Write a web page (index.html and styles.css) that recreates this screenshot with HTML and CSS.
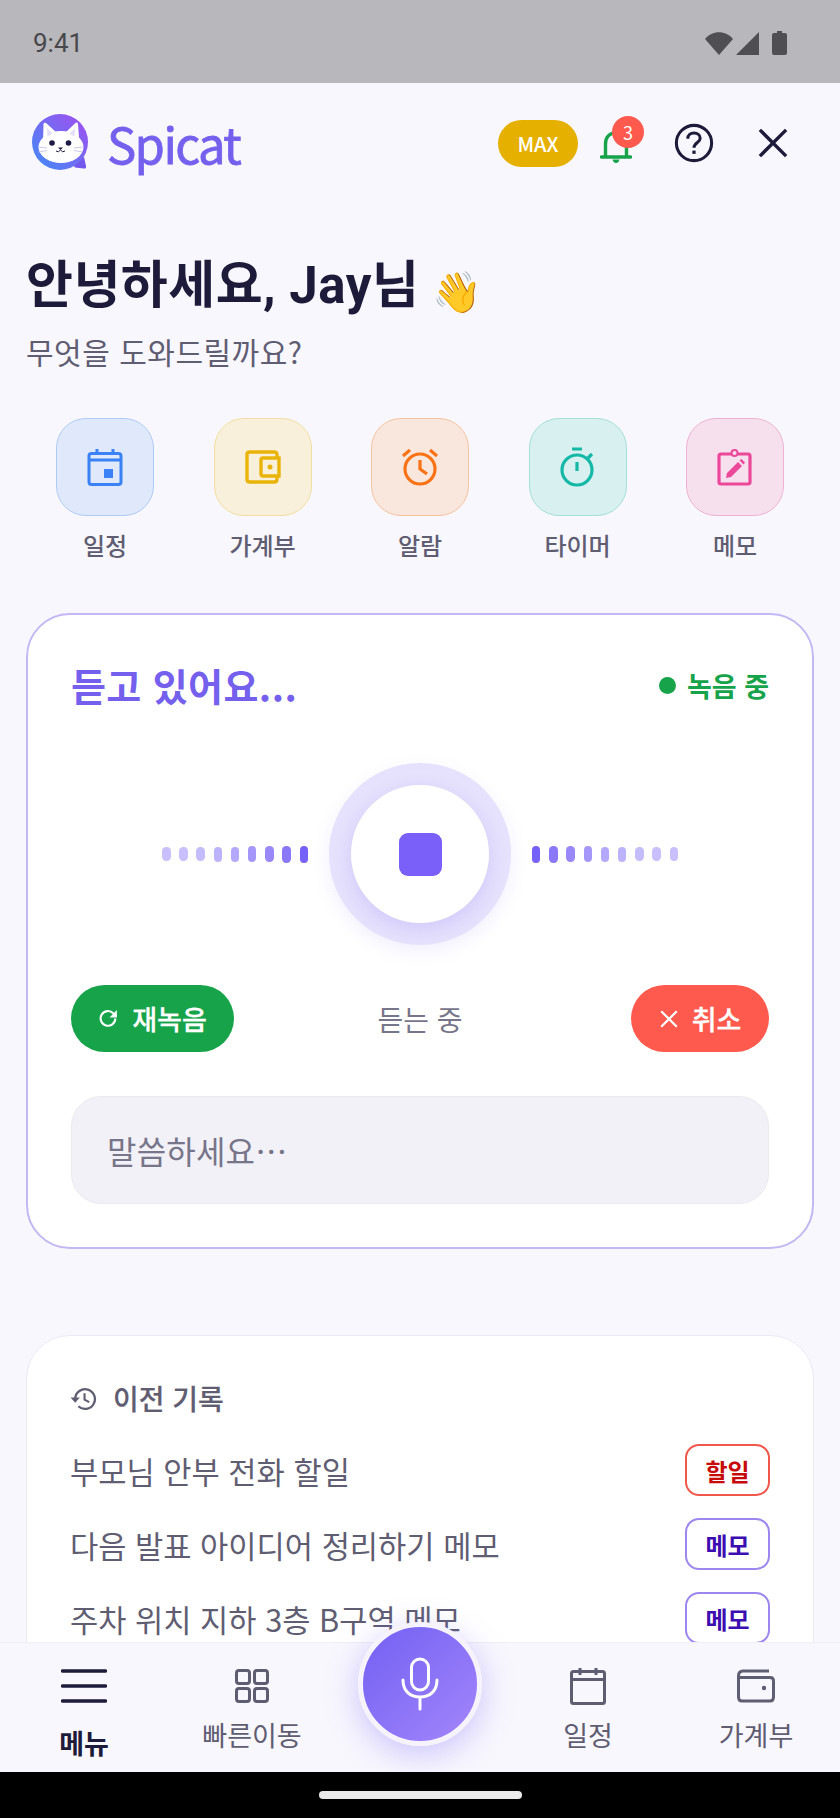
FILE: index.html
```html
<!DOCTYPE html>
<html lang="ko">
<head>
<meta charset="utf-8">
<title>Spicat</title>
<link rel="stylesheet" href="styles.css">
</head>
<body>
<div class="screen">
  <div class="status">
    <span class="time">9:41</span>
    <div class="status-icons">
      <svg width="28" height="23" viewBox="0 0 28 23"><path class="sb" d="M0 7 C7 -2 21 -2 28 7 L14 23 Z"/></svg>
      <svg width="23" height="23" viewBox="0 0 23 23"><path class="sb" d="M0 23 L23 0 V23 Z"/></svg>
      <svg width="15" height="24" viewBox="0 0 15 24"><path class="sb" d="M5 0 H10 V2 H13 Q15 2 15 4 V22 Q15 24 13 24 H2 Q0 24 0 22 V4 Q0 2 2 2 H5 Z"/></svg>
    </div>
  </div>

  <main class="page">
    <header class="top">
      <div class="brand">
        <svg class="logo" width="58" height="60" viewBox="0 0 58 60">
          <defs>
            <linearGradient id="lg" x1="0" y1="1" x2="1" y2="0">
              <stop offset="0" stop-color="#3f8cf5"/><stop offset="1" stop-color="#a54cf0"/>
            </linearGradient>
          </defs>
          <path d="M40 50 L52 44 L54 53 Q54.500 56 51.500 55.500 L43 54.500 Z" fill="#7358ee"/>
          <circle cx="28" cy="29" r="28" fill="url(#lg)"/>
          <path d="M11 30 L11.500 11 Q12 9 14 10 L24 19 Q29 18.500 34 19 L44 9.500 Q46 9 46 11 L47.500 30 Z" fill="#fff"/>
          <ellipse cx="29" cy="34" rx="22.500" ry="16" fill="#fff"/>
          <path d="M15 15 L20.500 20.500 L15.500 23.500 Z M43 15 L37.500 20.500 L42.500 23.500 Z" fill="#e4dffa"/>
          <circle cx="20" cy="30" r="2.800" fill="#1f1a45"/><circle cx="36.500" cy="30" r="2.800" fill="#1f1a45"/>
          <path d="M26 34.500 H31 L28.500 37 Z" fill="#1f1a45"/>
          <path d="M24 38 Q26.500 40 28.500 37 Q30.500 40 33 38" fill="none" stroke="#1f1a45" stroke-width="1"/>
          <path d="M6 34 L15 35 M6.500 39 L15 37.500 M51 34 L42 35 M50.500 39 L42 37.500" stroke="#cfc8ea" stroke-width="1" fill="none"/>
        </svg>
        <span class="brand-name">Spicat</span>
      </div>
      <div class="top-actions">
        <span class="max">MAX</span>
        <div class="bell">
          <svg width="32" height="34" viewBox="0 0 32 34"><path d="M5.500 27 V15 C5.500 8 9.500 4 16 4 C22.500 4 26.500 8 26.500 15 V27 M1.500 28 H30.500" fill="none" stroke="#16a34a" stroke-width="3.400" stroke-linecap="round"/><path d="M12.500 30.500 H19.500 Q18.500 34 16 34 Q13.500 34 12.500 30.500 Z" fill="#16a34a"/></svg>
          <span class="badge">3</span>
        </div>
        <svg class="help" width="40" height="40" viewBox="0 0 42 42"><circle cx="21" cy="21" r="18.500" fill="none" stroke="#1e1b3a" stroke-width="3.200"/><path d="M14.500 16.500 C14.500 12.500 17.500 10.500 21 10.500 C24.500 10.500 27.500 12.500 27.500 16 C27.500 20.500 21 20.500 21 26" fill="none" stroke="#1e1b3a" stroke-width="3.200"/><rect x="19.300" y="29" width="3.400" height="3.400" fill="#1e1b3a"/></svg>
        <svg class="close" width="30" height="30" viewBox="0 0 32 32"><path d="M2 2 L30 30 M30 2 L2 30" fill="none" stroke="#1e1b3a" stroke-width="3.600"/></svg>
      </div>
    </header>

    <section class="hello">
      <h1 class="hello-title">안녕하세요, Jay님 <span class="wave">👋</span></h1>
      <p class="hello-sub">무엇을 도와드릴까요?</p>
    </section>

    <nav class="quick">
      <div class="quick-item">
        <div class="quick-box q-blue"><svg width="36" height="38" viewBox="0 0 36 38"><path d="M2 8 Q2 5.500 4.500 5.500 H31.500 Q34 5.500 34 8 V34 Q34 36.500 31.500 36.500 H4.500 Q2 36.500 2 34 Z M2 12 H34 M10 1 V6 M26 1 V6" fill="none" stroke="#3b82f6" stroke-width="3"/><rect x="17" y="21" width="9" height="9" fill="#3b82f6"/></svg></div>
        <span class="quick-label">일정</span>
      </div>
      <div class="quick-item">
        <div class="quick-box q-yellow"><svg width="36" height="34" viewBox="0 0 36 34"><path d="M32 7 V4.500 Q32 2 29 2 H5 Q2 2 2 4.500 V29.500 Q2 32 5 32 H29 Q32 32 32 29.500 V27" fill="none" stroke="#eab308" stroke-width="3.400"/><path d="M18 8 H34 V26 H18 Q16 26 16 24 V10 Q16 8 18 8 Z" fill="none" stroke="#eab308" stroke-width="3.400"/><circle cx="25" cy="17" r="2.500" fill="#eab308"/></svg></div>
        <span class="quick-label">가계부</span>
      </div>
      <div class="quick-item">
        <div class="quick-box q-orange"><svg width="38" height="38" viewBox="0 0 38 38"><circle cx="19" cy="21" r="15" fill="none" stroke="#f97316" stroke-width="3.200"/><path d="M19 12 V21 L26 26 M2 8 L9 2 M36 8 L29 2" fill="none" stroke="#f97316" stroke-width="3.200"/></svg></div>
        <span class="quick-label">알람</span>
      </div>
      <div class="quick-item">
        <div class="quick-box q-teal"><svg width="36" height="40" viewBox="0 0 36 40"><circle cx="17" cy="23" r="15" fill="none" stroke="#14b8a6" stroke-width="3.200"/><path d="M12 2 H22 M17 15 V24 M28 11 L32 7" fill="none" stroke="#14b8a6" stroke-width="3.200"/></svg></div>
        <span class="quick-label">타이머</span>
      </div>
      <div class="quick-item">
        <div class="quick-box q-pink"><svg width="36" height="38" viewBox="0 0 36 38"><rect x="2" y="6" width="31" height="30" rx="2" fill="none" stroke="#ec4899" stroke-width="3.200"/><circle cx="17.500" cy="5" r="3" fill="#f6e0ee" stroke="#ec4899" stroke-width="2"/><path d="M9 30 L10 25 L21 14 L25 18 L14 29 Z M22.500 12.500 L24.500 11 L28 14.500 L26.500 16.500 Z" fill="#ec4899"/></svg></div>
        <span class="quick-label">메모</span>
      </div>
    </nav>

    <section class="card listen">
      <div class="listen-head">
        <h2 class="listen-title">듣고 있어요...</h2>
        <span class="rec"><i class="rec-dot"></i>녹음 중</span>
      </div>
      <div class="voice">
        <div class="wave-bars">
          <i class="bar" style="height:14px;opacity:.4"></i><i class="bar" style="height:14px;opacity:.4"></i><i class="bar" style="height:14px;opacity:.42"></i><i class="bar" style="height:15px;opacity:.48"></i><i class="bar" style="height:15px;opacity:.55"></i><i class="bar" style="height:16px;opacity:.65"></i><i class="bar" style="height:16px;opacity:.75"></i><i class="bar" style="height:17px;opacity:.85"></i><i class="bar" style="height:17px;opacity:1"></i>
        </div>
        <div class="stop-ring"><div class="stop-core"><i class="stop-square"></i></div></div>
        <div class="wave-bars">
          <i class="bar" style="height:17px;opacity:1"></i><i class="bar" style="height:17px;opacity:.85"></i><i class="bar" style="height:16px;opacity:.75"></i><i class="bar" style="height:16px;opacity:.65"></i><i class="bar" style="height:15px;opacity:.55"></i><i class="bar" style="height:15px;opacity:.48"></i><i class="bar" style="height:14px;opacity:.42"></i><i class="bar" style="height:14px;opacity:.4"></i><i class="bar" style="height:14px;opacity:.4"></i>
        </div>
      </div>
      <div class="controls">
        <button class="pill pill-green"><svg width="21" height="21" viewBox="0 0 20 20"><path d="M16.500 10 A7 7 0 1 1 14.500 5 L17 7.500" fill="none" stroke="#fff" stroke-width="2"/><path d="M18 2 V9 H11 Z" fill="#fff"/></svg>재녹음</button>
        <span class="state">듣는 중</span>
        <button class="pill pill-red"><svg width="20" height="20" viewBox="0 0 18 18"><path d="M2 2 L16 16 M16 2 L2 16" fill="none" stroke="#fff" stroke-width="2"/></svg>취소</button>
      </div>
      <div class="prompt">말씀하세요⋯</div>
    </section>

    <section class="card history">
      <h3 class="hist-title"><svg width="27" height="25" viewBox="0 0 26 24"><path d="M5 12 A9.500 9.500 0 1 1 8 19.500" fill="none" stroke="#5f5d72" stroke-width="2.200"/><path d="M0.500 11 H9.500 L5 16 Z" fill="#5f5d72"/><path d="M14 7 V13 L18.500 15.500" fill="none" stroke="#5f5d72" stroke-width="2"/></svg>이전 기록</h3>
      <div class="hist-row"><span class="hist-text">부모님 안부 전화 할일</span><span class="tag tag-red">할일</span></div>
      <div class="hist-row"><span class="hist-text">다음 발표 아이디어 정리하기 메모</span><span class="tag tag-violet">메모</span></div>
      <div class="hist-row"><span class="hist-text">주차 위치 지하 3층 B구역 메모</span><span class="tag tag-violet">메모</span></div>
    </section>
  </main>

  <nav class="tabbar">
    <div class="tab tab-active">
      <span class="tab-icon"><svg width="46" height="34" viewBox="0 0 46 34"><path d="M1.500 2 H44.500 M1.500 17 H44.500 M1.500 32 H44.500" fill="none" stroke="#1e1b3a" stroke-width="3.400" stroke-linecap="round"/></svg></span>
      <span class="tab-label">메뉴</span>
    </div>
    <div class="tab">
      <span class="tab-icon"><svg width="34" height="34" viewBox="0 0 34 34"><rect x="1.500" y="1.500" width="13" height="13" rx="2.500" class="ti"/><rect x="19.500" y="1.500" width="13" height="13" rx="2.500" class="ti"/><rect x="1.500" y="19.500" width="13" height="13" rx="2.500" class="ti"/><rect x="19.500" y="19.500" width="13" height="13" rx="2.500" class="ti"/></svg></span>
      <span class="tab-label">빠른이동</span>
    </div>
    <div class="tab"></div>
    <div class="tab">
      <span class="tab-icon"><svg width="36" height="38" viewBox="0 0 36 38"><rect x="1.500" y="4.500" width="33" height="32" rx="2" class="ti"/><path d="M1.500 12.500 H34.500 M10 1 V8 M26 1 V8" class="ti"/></svg></span>
      <span class="tab-label">일정</span>
    </div>
    <div class="tab">
      <span class="tab-icon"><svg width="38" height="34" viewBox="0 0 38 34"><path d="M32 2 H6 Q1.500 2 1.500 7 V28 Q1.500 32 5 32 H33 Q36.500 32 36.500 28 V12 Q36.500 8.500 33 8.500 H1.500" class="ti"/><circle cx="27" cy="19" r="2.200" fill="#5f5d72"/></svg></span>
      <span class="tab-label">가계부</span>
    </div>
    <button class="mic">
      <svg width="40" height="54" viewBox="0 0 40 54"><rect x="11.500" y="2" width="17" height="31" rx="8.500" fill="none" stroke="#fff" stroke-width="3"/><path d="M3 23 C3 34 10 40 20 40 C30 40 37 34 37 23 M20 40 V52" fill="none" stroke="#fff" stroke-width="3" stroke-linecap="round"/></svg>
    </button>
  </nav>

  <div class="gesture"><i class="gesture-pill"></i></div>
</div>
</body>
</html>
```
FILE: styles.css
```css
* { box-sizing: border-box; }
html, body { margin: 0; padding: 0; }
body { width: 840px; height: 1818px; overflow: hidden; font-family: "Noto Sans CJK KR", "Noto Sans", sans-serif; background: #f8f7fd; color: #1e1b3a; }
i { display: block; }
button { font-family: inherit; border: 0; padding: 0; }
h1, h2, h3, p { margin: 0; }

.screen { position: relative; width: 840px; height: 1818px; display: flex; flex-direction: column; overflow: hidden; }

.status { flex: none; height: 83px; background: #b8b7bb; display: flex; align-items: center; justify-content: space-between; padding: 3px 53px 0 33px; }
.time { font-family: Roboto, sans-serif; font-size: 26px; color: #48484c; }
.status-icons { display: flex; align-items: center; gap: 3px; }
.status-icons svg + svg + svg { margin-left: 10px; }
.sb { fill: #4f4e53; }

.page { flex: 1; min-height: 0; overflow: hidden; display: flex; flex-direction: column; padding: 0 26px; }

.top { flex: none; height: 112px; display: flex; align-items: center; justify-content: space-between; padding: 8px 0 0 6px; }
.brand { display: flex; align-items: center; gap: 17px; }
.brand-name { font-size: 49px; font-weight: 400; -webkit-text-stroke: 0.8px #7560ee; color: #7560ee; letter-spacing: -1.600px; line-height: 60px; }
.top-actions { display: flex; align-items: center; margin-right: 26px; }
.max { width: 80px; height: 47px; border-radius: 24px; background: #e6b000; color: #fff; font-size: 20px; font-weight: 500; display: flex; align-items: center; justify-content: center; }
.bell { position: relative; margin-left: 22px; width: 32px; height: 34px; margin-top: 6px; }
.bell svg { display: block; }
.badge { position: absolute; top: -13px; left: 12px; width: 32px; height: 32px; border-radius: 50%; background: #ff5a4d; color: #fff; font-size: 18px; display: flex; align-items: center; justify-content: center; }
.help { margin-left: 42px; }
.close { margin-left: 44px; }

.hello { flex: none; padding-top: 55px; }
.hello-title { font-family: Roboto, "Noto Sans CJK KR", sans-serif; font-size: 51px; font-weight: 700; line-height: 72px; letter-spacing: 0.500px; color: #1e1b3a; }
.wave { font-size: 40px; font-family: "Noto Color Emoji", "Noto Sans CJK KR", sans-serif; vertical-align: -3px; }
.hello-sub { font-size: 30px; letter-spacing: 0.500px; line-height: 42px; color: #5f5d72; margin-top: 1px; }

.quick { flex: none; display: flex; justify-content: space-between; padding: 0 30px 0 30px; margin-top: 46px; }
.quick-item { width: 98px; display: flex; flex-direction: column; align-items: center; }
.quick-box { width: 98px; height: 98px; border-radius: 30px; border: 1.500px solid; display: flex; align-items: center; justify-content: center; }
.q-blue { background: #dfe9fb; border-color: #aecbf5; }
.q-yellow { background: #f9f0db; border-color: #f1dfa0; }
.q-orange { background: #f9e7dd; border-color: #f6c3a0; }
.q-teal { background: #d9f0f0; border-color: #a3e0d6; }
.q-pink { background: #f6e0ee; border-color: #efb2d2; }
.quick-label { font-size: 24px; font-weight: 500; line-height: 36px; color: #5f5d72; margin-top: 11px; }

.card { background: #fff; border-radius: 44px; width: 788px; flex: none; }
.listen { height: 636px; margin-top: 50px; border: 2px solid #c3b8f3; padding: 44px 43px 0; }
.listen-head { display: flex; align-items: center; justify-content: space-between; }
.listen-title { font-size: 38px; font-weight: 700; line-height: 52px; letter-spacing: 0.400px; color: #7560ee; }
.rec { display: flex; align-items: center; gap: 11px; font-size: 27px; font-weight: 700; color: #16a34a; }
.rec-dot { width: 17px; height: 17px; border-radius: 50%; background: #16a34a; }

.voice { display: flex; align-items: center; justify-content: center; margin-top: 52px; gap: 21px; }
.wave-bars { display: flex; align-items: center; gap: 8.800px; }
.bar { width: 8.400px; border-radius: 4.200px; background: #7560f8; }
.stop-ring { width: 182px; height: 182px; border-radius: 50%; background: #e6e1fc; box-shadow: 0 6px 18px rgba(117,96,248,.1); display: flex; align-items: center; justify-content: center; }
.stop-core { width: 138px; height: 138px; border-radius: 50%; background: #fff; box-shadow: 0 6px 18px rgba(117,96,248,.18); display: flex; align-items: center; justify-content: center; }
.stop-square { width: 43px; height: 43px; border-radius: 9px; background: #7a60f8; }

.controls { display: grid; grid-template-columns: 1fr auto 1fr; align-items: center; margin-top: 40px; }
.pill { height: 67px; border-radius: 34px; color: #fff; font-size: 27px; font-weight: 500; -webkit-text-stroke: 0.3px #fff; display: flex; align-items: center; justify-content: center; gap: 13px; }
.pill-green { width: 163px; background: #16a34a; justify-self: start; }
.pill-red { width: 138px; background: #ff5a4d; justify-self: end; }
.state { font-size: 28px; color: #77758a; }
.prompt { margin-top: 44px; height: 108px; border-radius: 30px; background: #f2f1f7; border: 1px solid #ebeaf1; display: flex; align-items: center; padding-left: 35px; font-size: 32px; letter-spacing: 0.200px; color: #77758a; }

.history { margin-top: 86px; height: 400px; border: 1.500px solid #ece9f6; padding: 42px 43px 0; }
.hist-title { display: flex; align-items: center; gap: 16px; font-size: 28px; font-weight: 500; -webkit-text-stroke: 0.2px #5f5d72; color: #5f5d72; line-height: 40px; }
.hist-row { display: flex; align-items: center; justify-content: space-between; height: 52px; margin-top: 22px; }
.hist-title + .hist-row { margin-top: 26px; }
.hist-text { font-size: 30.700px; color: #5f5d72; }
.tag { width: 85px; height: 52px; border-radius: 14px; border: 2px solid; background: #fff; display: flex; align-items: center; justify-content: center; font-size: 24px; font-weight: 700; }
.tag-red { border-color: #f0584c; color: #c70a0a; }
.tag-violet { border-color: #9d87ee; color: #3c0db0; }

.tabbar { position: absolute; left: 0; right: 0; top: 1642px; height: 130px; background: #f8f7fd; border-top: 1px solid #f0eef6; display: flex; }
.tab { flex: 1; display: flex; flex-direction: column; align-items: center; padding-top: 24px; }
.tab-icon { height: 38px; display: flex; align-items: center; justify-content: center; }
.tab-label { font-size: 27px; color: #5f5d72; line-height: 36px; margin-top: 12px; }
.tab-active .tab-label { font-weight: 700; color: #1e1b3a; margin-top: 20px; }
.ti { fill: none; stroke: #5f5d72; stroke-width: 3; }
.mic { position: absolute; left: 358px; top: -21px; width: 124px; height: 124px; border-radius: 50%; border: 5px solid #f6f3ff; background: linear-gradient(135deg, #7260f2, #a386fb); box-shadow: 0 8px 32px rgba(117,96,248,.35); display: flex; align-items: center; justify-content: center; }

.gesture { position: absolute; left: 0; right: 0; top: 1772px; height: 46px; background: #000; display: flex; justify-content: center; padding-top: 19px; }
.gesture-pill { width: 203px; height: 8px; border-radius: 4px; background: #ebebeb; }
```
